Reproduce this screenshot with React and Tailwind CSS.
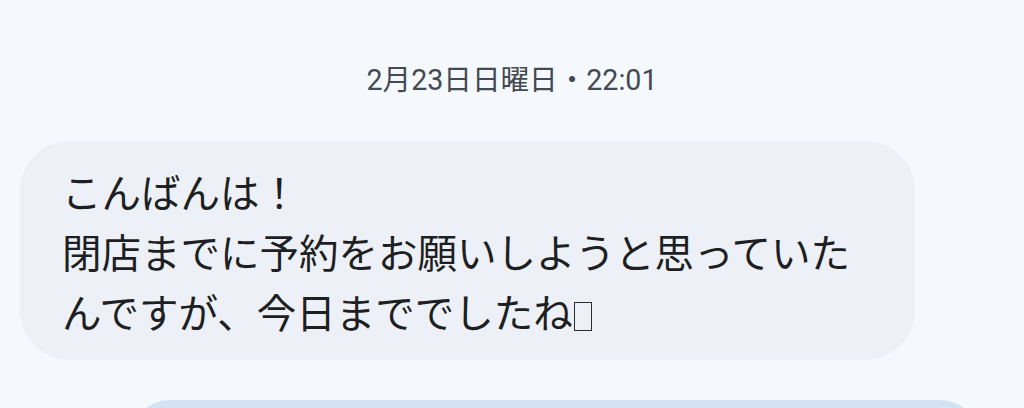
import React from 'react';

export default function App() {
  return (
    <div
      className="w-[1024px] h-[408px] overflow-hidden bg-[#f5f9fe] flex flex-col"
      style={{ fontFamily: 'Roboto, "Noto Sans CJK JP", "Noto Sans", sans-serif' }}
    >
      {/* Date divider */}
      <div className="shrink-0 pt-[60px] h-[141px] flex justify-center">
        <span className="text-[28.6px] leading-[40px] text-[#444a52]">2月23日日曜日・22:01</span>
      </div>

      {/* Incoming message */}
      <div className="shrink-0 pl-[20px]">
        <div className="w-[895px] h-[219px] rounded-[50px] bg-[#edf1f7] pl-[42px] pt-[20px]">
          <p
            className="text-[39.5px] leading-[60px] text-[#1d1f22]"
            style={{ fontFamily: '"Noto Sans CJK JP", sans-serif' }}
          >
            こんばんは！
            <br />
            閉店までに予約をお願いしようと思っていた
            <br />
            んですが、今日まででしたね
            <span className="inline-block w-[18px] h-[29px] ml-[1px] border-[1.5px] border-[#2a2c30] align-[-3px]" />
          </p>
        </div>
      </div>

      {/* Outgoing message (cut off) */}
      <div className="shrink-0 pt-[40px] pl-[130px]">
        <div className="w-[850px] h-[80px] rounded-t-[40px] bg-[#d3e3f4]" />
      </div>
    </div>
  );
}
